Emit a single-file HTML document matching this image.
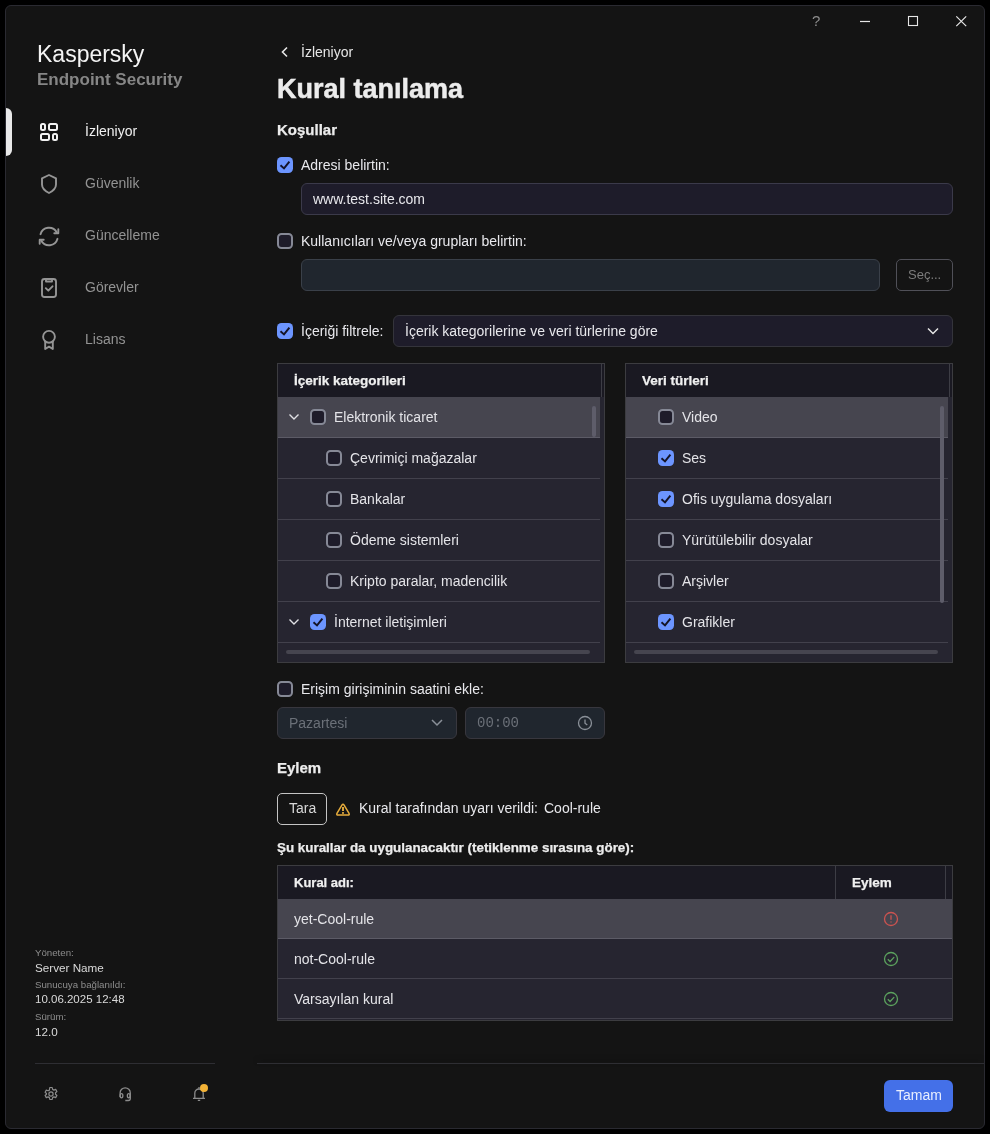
<!DOCTYPE html>
<html><head><meta charset="utf-8">
<style>
*{box-sizing:border-box;margin:0;padding:0}
html,body{width:990px;height:1134px;background:#000;overflow:hidden;font-family:"Liberation Sans",sans-serif;color:#e8e8ec}
.win{position:absolute;left:5px;top:5px;width:980px;height:1124px;background:#141414;border:1px solid #2a2a31;border-radius:6px;overflow:hidden}
.a{position:absolute;white-space:nowrap}
.t14{font-size:14px;line-height:16px}
.cb{position:absolute;width:16px;height:16px;border-radius:4.5px;border:2px solid #868996;background:#1e1c2a}
.cb.on{background:#6c95ff;border:none}
.cb.on svg{position:absolute;left:0;top:0}
.inp{position:absolute;border:1px solid #3b3a4a;background:#1e1c2a;border-radius:6px}
.lbl{position:absolute;left:85px;font-size:14px;line-height:16px;color:#939393}
.tbl{border:1px solid #3c3c40;background:#262530}
.hdr{background:#1a1922}
.ic{position:absolute;fill:none}
.root{position:absolute;left:0;top:0;width:990px;height:1134px;will-change:transform}
</style></head>
<body><div class="root">
<div class="win"></div>

<div class="a" style="left:812px;top:12px;font-size:15px;line-height:17px;color:#8c8c8c">?</div>
<svg class="ic" style="left:856px;top:14px" width="18" height="14"><path d="M4 7.5H14" stroke="#e6e6e6" stroke-width="1.2"/></svg>
<svg class="ic" style="left:904px;top:12px" width="18" height="18"><rect x="4.5" y="4.5" width="9" height="9" stroke="#e6e6e6" stroke-width="1.1"/></svg>
<svg class="ic" style="left:952px;top:12px" width="18" height="18"><path d="M4.3 4.3L14.2 14.2M14.2 4.3L4.3 14.2" stroke="#e6e6e6" stroke-width="1.2"/></svg>

<div class="a" style="left:37px;top:41px;font-size:23px;line-height:26px;color:#f4f4f4">Kaspersky</div>
<div class="a" style="left:37px;top:70px;font-size:17px;line-height:20px;font-weight:bold;color:#868686">Endpoint Security</div>
<div class="a" style="left:6px;top:108px;width:6px;height:48px;background:#e8e8e8;border-radius:0 6px 6px 0"></div>

<svg class="ic" style="left:0;top:0" width="70" height="360" stroke-width="2">
 <g stroke="#f2f2f2"><rect x="41" y="124" width="4" height="6" rx="1.5"/><rect x="49" y="124" width="8" height="6" rx="1.5"/><rect x="41" y="134" width="8" height="6" rx="1.5"/><rect x="53" y="134" width="4" height="6" rx="1.5"/></g>
 <g stroke="#959595" stroke-width="1.9" stroke-linejoin="round" stroke-linecap="round">
  <path d="M49 175L42 178.3V184.5C42 188 45 191 49 193C53 191 56 188 56 184.5V178.3Z"/>
  <path d="M40.5 234.2A8.8 8.8 0 0 1 56.7 232.3"/><path d="M58.3 229.2V233.3H54.3"/>
  <path d="M57.5 238.8A8.8 8.8 0 0 1 41.3 240.7"/><path d="M39.7 243.8V239.7H43.7"/>
  <rect x="42" y="279" width="14" height="18" rx="2.5"/><path d="M46 279.5V281.5H52V279.5"/><path d="M45.8 288.2L48.3 290.7L52.5 286.3"/>
  <circle cx="49" cy="336.8" r="5.9"/><path d="M45.2 341.5V349L49 346.6L52.8 349V341.5"/>
 </g>
</svg>
<div class="lbl" style="top:123px;color:#f0f0f0">İzleniyor</div>
<div class="lbl" style="top:175px">Güvenlik</div>
<div class="lbl" style="top:227px">Güncelleme</div>
<div class="lbl" style="top:279px">Görevler</div>
<div class="lbl" style="top:331px">Lisans</div>

<div class="a" style="left:35px;top:947px;font-size:9.7px;line-height:11px;color:#8e8e8e">Yöneten:</div>
<div class="a" style="left:35px;top:961px;font-size:11.7px;line-height:13px;color:#dadada">Server Name</div>
<div class="a" style="left:35px;top:979px;font-size:9.7px;line-height:11px;color:#8e8e8e">Sunucuya bağlanıldı:</div>
<div class="a" style="left:35px;top:993px;font-size:11.5px;line-height:13px;color:#dadada">10.06.2025 12:48</div>
<div class="a" style="left:35px;top:1011px;font-size:9.7px;line-height:11px;color:#8e8e8e">Sürüm:</div>
<div class="a" style="left:35px;top:1025px;font-size:11.7px;line-height:13px;color:#dadada">12.0</div>
<div class="a" style="left:35px;top:1063px;width:180px;height:1px;background:#2e2e33"></div>
<div class="a" style="left:257px;top:1063px;width:727px;height:1px;background:#2e2e33;box-shadow:0 -3px 5px rgba(0,0,0,0.35)"></div>

<svg class="ic" style="left:43px;top:1086px" width="16" height="16" viewBox="0 0 16 16" stroke="#8c8c8c" stroke-width="1.2"><path d="M6.8 1.5h2.4l.4 1.9l1.3.7l1.8-.7l1.2 2.1l-1.4 1.3v1.4l1.4 1.3l-1.2 2.1l-1.8-.7l-1.3.7l-.4 1.9H6.8l-.4-1.9l-1.3-.7l-1.8.7l-1.2-2.1l1.4-1.3V7.5L2.1 6.2l1.2-2.1l1.8.7l1.3-.7z" stroke-linejoin="round"/><circle cx="8" cy="8" r="2.1"/></svg>
<svg class="ic" style="left:114px;top:1082px" width="22" height="22" viewBox="0 0 22 22" stroke="#8c8c8c" stroke-width="1.3"><path d="M6.1 15V10.9A5.1 5.1 0 0 1 16.3 10.9V16.6A1.9 1.9 0 0 1 14.4 18.5H11.3"/><ellipse cx="7.5" cy="13.8" rx="1.35" ry="2.1"/><ellipse cx="14.7" cy="13.8" rx="1.35" ry="2.1"/></svg>
<svg class="ic" style="left:191px;top:1086px" width="16" height="16" viewBox="0 0 16 16" stroke="#8c8c8c" stroke-width="1.3"><path d="M3.8 12V7.2a4.2 4.2 0 0 1 8.4 0V12M2 12.3h12M8 1v2M6.8 14.4h2.4"/></svg>
<div class="a" style="left:200px;top:1084px;width:8px;height:8px;border-radius:50%;background:#f2b236"></div>

<svg class="ic" style="left:279px;top:45px" width="12" height="14" viewBox="0 0 12 14" stroke="#e6e6e6" stroke-width="1.6"><path d="M8 2.5L3.5 7L8 11.5"/></svg>
<div class="a t14" style="left:301px;top:44px;color:#e6e6e6">İzleniyor</div>
<div class="a" style="left:277px;top:73px;font-size:27px;line-height:32px;font-weight:bold;color:#ececec;-webkit-text-stroke:0.5px #ececec">Kural tanılama</div>
<div class="a" style="left:277px;top:121px;font-size:15px;line-height:18px;font-weight:bold;color:#ececec;-webkit-text-stroke:0.25px #ececec">Koşullar</div>

<div class="cb on" style="left:277px;top:157px"><svg width="16" height="16" viewBox="0 0 16 16"><path d="M3.5 8.3L7 11.4L12.4 4.7" fill="none" stroke="#141428" stroke-width="2"/></svg></div>
<div class="a t14" style="left:301px;top:157px">Adresi belirtin:</div>
<div class="inp" style="left:301px;top:183px;width:652px;height:32px"></div>
<div class="a t14" style="left:313px;top:191px">www.test.site.com</div>

<div class="cb" style="left:277px;top:233px"></div>
<div class="a t14" style="left:301px;top:233px">Kullanıcıları ve/veya grupları belirtin:</div>
<div class="inp" style="left:301px;top:259px;width:579px;height:32px;background:#20262e;border-color:#3a4049"></div>
<div class="a" style="left:896px;top:259px;width:57px;height:32px;border:1px solid #505058;border-radius:5px"></div>
<div class="a" style="left:908px;top:267px;font-size:13px;line-height:16px;color:#7c7c7c">Seç...</div>

<div class="cb on" style="left:277px;top:323px"><svg width="16" height="16" viewBox="0 0 16 16"><path d="M3.5 8.3L7 11.4L12.4 4.7" fill="none" stroke="#141428" stroke-width="2"/></svg></div>
<div class="a t14" style="left:301px;top:323px">İçeriği filtrele:</div>
<div class="inp" style="left:393px;top:315px;width:560px;height:32px;border-color:#34343b"></div>
<div class="a t14" style="left:405px;top:323px">İçerik kategorilerine ve veri türlerine göre</div>
<svg class="ic" style="left:926px;top:325px" width="14" height="12" viewBox="0 0 14 12" stroke="#e6e6e6" stroke-width="1.5"><path d="M2 3.5L7 8.5L12 3.5"/></svg>

<div class="a tbl" style="left:277px;top:363px;width:328px;height:300px"><div class="a hdr" style="left:0;top:0;width:326px;height:33px"></div><div class="a" style="left:323px;top:0;width:1px;height:33px;background:#3d3d45"></div><div class="a" style="left:16px;top:9px;font-size:13.5px;line-height:16px;font-weight:bold;color:#f0f0f0;-webkit-text-stroke:0.25px #f0f0f0">İçerik kategorileri</div><div class="a" style="left:0;top:33px;width:322px;height:40px;background:#46454f"></div><div class="a" style="left:0;top:73px;width:322px;height:1px;background:#5c5b66"></div><svg class="ic" style="left:10px;top:49px" width="12" height="8" viewBox="0 0 12 8" stroke="#e0e0e4" stroke-width="1.4"><path d="M1.5 1.5L6 6L10.5 1.5"/></svg><div class="cb" style="left:32px;top:45px"></div><div class="a t14" style="left:56px;top:45px;color:#e4e4e8">Elektronik ticaret</div><div class="a" style="left:0;top:114px;width:322px;height:1px;background:#42414c"></div><div class="cb" style="left:48px;top:86px"></div><div class="a t14" style="left:72px;top:86px;color:#e4e4e8">Çevrimiçi mağazalar</div><div class="a" style="left:0;top:155px;width:322px;height:1px;background:#42414c"></div><div class="cb" style="left:48px;top:127px"></div><div class="a t14" style="left:72px;top:127px;color:#e4e4e8">Bankalar</div><div class="a" style="left:0;top:196px;width:322px;height:1px;background:#42414c"></div><div class="cb" style="left:48px;top:168px"></div><div class="a t14" style="left:72px;top:168px;color:#e4e4e8">Ödeme sistemleri</div><div class="a" style="left:0;top:237px;width:322px;height:1px;background:#42414c"></div><div class="cb" style="left:48px;top:209px"></div><div class="a t14" style="left:72px;top:209px;color:#e4e4e8">Kripto paralar, madencilik</div><div class="a" style="left:0;top:278px;width:322px;height:1px;background:#42414c"></div><svg class="ic" style="left:10px;top:254px" width="12" height="8" viewBox="0 0 12 8" stroke="#e0e0e4" stroke-width="1.4"><path d="M1.5 1.5L6 6L10.5 1.5"/></svg><div class="cb on" style="left:32px;top:250px"><svg width="16" height="16" viewBox="0 0 16 16"><path d="M3.5 8.3L7 11.4L12.4 4.7" fill="none" stroke="#141428" stroke-width="2"/></svg></div><div class="a t14" style="left:56px;top:250px;color:#e4e4e8">İnternet iletişimleri</div><div class="a" style="left:314px;top:42px;width:4px;height:31px;border-radius:2px;background:#5e5d6a"></div><div class="a" style="left:8px;top:286px;width:304px;height:4px;border-radius:2px;background:#46454f"></div></div>
<div class="a tbl" style="left:625px;top:363px;width:328px;height:300px"><div class="a hdr" style="left:0;top:0;width:326px;height:33px"></div><div class="a" style="left:323px;top:0;width:1px;height:33px;background:#3d3d45"></div><div class="a" style="left:16px;top:9px;font-size:13.5px;line-height:16px;font-weight:bold;color:#f0f0f0;-webkit-text-stroke:0.25px #f0f0f0">Veri türleri</div><div class="a" style="left:0;top:33px;width:322px;height:40px;background:#46454f"></div><div class="a" style="left:0;top:73px;width:322px;height:1px;background:#5c5b66"></div><div class="cb" style="left:32px;top:45px"></div><div class="a t14" style="left:56px;top:45px;color:#e4e4e8">Video</div><div class="a" style="left:0;top:114px;width:322px;height:1px;background:#42414c"></div><div class="cb on" style="left:32px;top:86px"><svg width="16" height="16" viewBox="0 0 16 16"><path d="M3.5 8.3L7 11.4L12.4 4.7" fill="none" stroke="#141428" stroke-width="2"/></svg></div><div class="a t14" style="left:56px;top:86px;color:#e4e4e8">Ses</div><div class="a" style="left:0;top:155px;width:322px;height:1px;background:#42414c"></div><div class="cb on" style="left:32px;top:127px"><svg width="16" height="16" viewBox="0 0 16 16"><path d="M3.5 8.3L7 11.4L12.4 4.7" fill="none" stroke="#141428" stroke-width="2"/></svg></div><div class="a t14" style="left:56px;top:127px;color:#e4e4e8">Ofis uygulama dosyaları</div><div class="a" style="left:0;top:196px;width:322px;height:1px;background:#42414c"></div><div class="cb" style="left:32px;top:168px"></div><div class="a t14" style="left:56px;top:168px;color:#e4e4e8">Yürütülebilir dosyalar</div><div class="a" style="left:0;top:237px;width:322px;height:1px;background:#42414c"></div><div class="cb" style="left:32px;top:209px"></div><div class="a t14" style="left:56px;top:209px;color:#e4e4e8">Arşivler</div><div class="a" style="left:0;top:278px;width:322px;height:1px;background:#42414c"></div><div class="cb on" style="left:32px;top:250px"><svg width="16" height="16" viewBox="0 0 16 16"><path d="M3.5 8.3L7 11.4L12.4 4.7" fill="none" stroke="#141428" stroke-width="2"/></svg></div><div class="a t14" style="left:56px;top:250px;color:#e4e4e8">Grafikler</div><div class="a" style="left:314px;top:42px;width:4px;height:197px;border-radius:2px;background:#5e5d6a"></div><div class="a" style="left:8px;top:286px;width:304px;height:4px;border-radius:2px;background:#46454f"></div></div>
<div class="cb" style="left:277px;top:681px"></div>
<div class="a t14" style="left:301px;top:681px">Erişim girişiminin saatini ekle:</div>
<div class="inp" style="left:277px;top:707px;width:180px;height:32px;background:#20262e;border-color:#38373e"></div>
<div class="a t14" style="left:289px;top:715px;color:#6b7078">Pazartesi</div>
<svg class="ic" style="left:430px;top:717px" width="14" height="12" viewBox="0 0 14 12" stroke="#8a9098" stroke-width="1.5"><path d="M2 3L7 8L12 3"/></svg>
<div class="inp" style="left:465px;top:707px;width:140px;height:32px;background:#20262e;border-color:#38373e"></div>
<div class="a" style="left:477px;top:715px;font-family:'Liberation Mono',monospace;font-size:14px;line-height:16px;color:#6b7078">00:00</div>
<svg class="ic" style="left:577px;top:715px" width="16" height="16" viewBox="0 0 16 16" stroke="#8a9098" stroke-width="1.3"><circle cx="8" cy="8" r="6.5"/><path d="M8 4.5V8.2L10.3 10"/></svg>

<div class="a" style="left:277px;top:759px;font-size:15px;line-height:18px;font-weight:bold;color:#ececec;-webkit-text-stroke:0.25px #ececec">Eylem</div>
<div class="a" style="left:277px;top:793px;width:50px;height:32px;border:1px solid #c4c4c4;border-radius:5px"></div>
<div class="a t14" style="left:289px;top:800px;color:#d8d8d8">Tara</div>
<svg class="ic" style="left:335px;top:802px" width="16" height="15" viewBox="0 0 16 15"><path d="M6.9 3.1Q8 1.3 9.1 3.1L13.9 11.1Q15 13 12.8 13H3.2Q1 13 2.1 11.1Z" stroke="#e6ac3c" stroke-width="1.5" stroke-linejoin="round"/><rect x="7.05" y="5" width="1.9" height="4" fill="#e6ac3c"/><rect x="7.05" y="10.1" width="1.9" height="1.7" fill="#e6ac3c"/></svg>
<div class="a t14" style="left:359px;top:800px">Kural tarafından uyarı verildi:</div>
<div class="a t14" style="left:544px;top:800px">Cool-rule</div>
<div class="a" style="left:277px;top:840px;font-size:13.4px;line-height:16px;font-weight:bold;color:#ececec;-webkit-text-stroke:0.25px #ececec">Şu kurallar da uygulanacaktır (tetiklenme sırasına göre):</div>

<div class="a tbl" style="left:277px;top:865px;width:676px;height:156px">
 <div class="a hdr" style="left:0;top:0;width:674px;height:33px"></div>
 <div class="a" style="left:557px;top:0;width:1px;height:33px;background:#3d3d45"></div>
 <div class="a" style="left:667px;top:0;width:1px;height:33px;background:#3d3d45"></div>
 <div class="a" style="left:16px;top:9px;font-size:13px;line-height:16px;font-weight:bold;color:#f0f0f0;-webkit-text-stroke:0.25px #f0f0f0">Kural adı:</div>
 <div class="a" style="left:574px;top:9px;font-size:13.5px;line-height:16px;font-weight:bold;color:#f0f0f0;-webkit-text-stroke:0.25px #f0f0f0">Eylem</div>
 <div class="a" style="left:0;top:33px;width:674px;height:39px;background:#46454f"></div>
 <div class="a" style="left:0;top:72px;width:674px;height:1px;background:#5c5b66"></div>
 <div class="a" style="left:0;top:112px;width:674px;height:1px;background:#42414c"></div>
 <div class="a" style="left:0;top:152px;width:674px;height:1px;background:#42414c"></div>
 <div class="a t14" style="left:16px;top:45px;color:#e4e4e8">yet-Cool-rule</div>
 <div class="a t14" style="left:16px;top:85px;color:#e4e4e8">not-Cool-rule</div>
 <div class="a t14" style="left:16px;top:125px;color:#e4e4e8">Varsayılan kural</div>
 <svg class="ic" style="left:605px;top:45px" width="16" height="16" viewBox="0 0 16 16" stroke="#cc5350" stroke-width="1.3"><circle cx="8" cy="8" r="6.5"/><path d="M8 4.3V8.8M8 10.4V11.6"/></svg>
 <svg class="ic" style="left:605px;top:85px" width="16" height="16" viewBox="0 0 16 16" stroke="#5ca25e" stroke-width="1.3"><circle cx="8" cy="8" r="6.5"/><path d="M4.8 8.3L7.1 10.5L11.2 6.1"/></svg>
 <svg class="ic" style="left:605px;top:125px" width="16" height="16" viewBox="0 0 16 16" stroke="#5ca25e" stroke-width="1.3"><circle cx="8" cy="8" r="6.5"/><path d="M4.8 8.3L7.1 10.5L11.2 6.1"/></svg>
</div>

<div class="a" style="left:884px;top:1080px;width:69px;height:32px;background:#4470e8;border-radius:6px"></div>
<div class="a t14" style="left:896px;top:1087px;color:#e8eeff">Tamam</div>
</div></body></html>
